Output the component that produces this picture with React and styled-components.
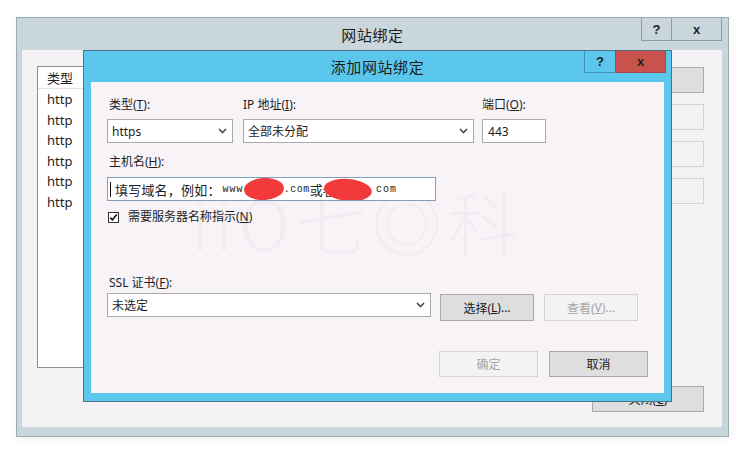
import React from 'react';
import styled, { createGlobalStyle } from 'styled-components';

const GlobalStyle = createGlobalStyle`
  html, body { margin: 0; background: #fff; }
  body {
    font-family: "Noto Sans", "Noto Sans CJK SC", sans-serif;
    font-size: 12px;
    color: #1e1e1e;
  }
  u { text-underline-offset: 1px; }
`;

const Page = styled.div`
  width: 744px;
  height: 453px;
  padding: 17px 0 0 16px;
  box-sizing: border-box;
  overflow: hidden;
`;

const Window = styled.div`
  position: relative;
  width: 713px;
  height: 420px;
  box-sizing: border-box;
  background: #c9d6dc;
  border: 1px solid #9aabb4;
  box-shadow: 0 3px 10px rgba(0, 0, 0, 0.06);
  display: flex;
  flex-direction: column;
`;

const TitleBar = styled.div`
  display: grid;
  grid-template-columns: 1fr auto 1fr;
  align-items: start;
  height: ${p => p.$h}px;
  flex: none;
  background: ${p => p.$bg};
`;

const Title = styled.div`
  grid-column: 2;
  align-self: center;
  font-family: "Noto Sans CJK SC", sans-serif;
  font-size: 15px;
  letter-spacing: 0.6px;
  color: #1c1c1c;
`;

const Caption = styled.div`
  grid-column: 3;
  justify-self: end;
  display: flex;
  margin-right: ${p => p.$mr}px;
`;

const CapButton = styled.div`
  width: ${p => p.$w}px;
  height: ${p => p.$h}px;
  box-sizing: border-box;
  display: flex;
  align-items: center;
  justify-content: center;
  background: ${p => p.$bg || 'transparent'};
  border: 1px solid ${p => p.$line};
  border-top: none;
  margin-left: -1px;
  font-family: "Liberation Sans", sans-serif;
  font-weight: bold;
  font-size: 13px;
  color: #222;
`;

const WindowBody = styled.div`
  flex: 1;
  margin: 0 6px 9px 5px;
  background: #f5f2f5;
  display: grid;
  grid-template-columns: 1fr 116px;
  column-gap: 8px;
  padding: 16px 18px 15px 15px;
`;

const BindingList = styled.div`
  height: 302px;
  box-sizing: border-box;
  background: #fff;
  border: 1px solid #8a8f96;
`;

const ListHead = styled.div`
  height: 22px;
  box-sizing: border-box;
  border-bottom: 1px solid #e3e3e3;
  padding-left: 9px;
  font-family: "Noto Sans CJK SC", sans-serif;
  font-size: 13px;
  line-height: 21px;
`;

const ListRow = styled.div`
  padding-left: 9px;
  font-size: 13px;
  line-height: 20.5px;
  &:first-of-type { margin-top: 2px; }
`;

const SideColumn = styled.div`
  display: flex;
  flex-direction: column;
  align-items: flex-end;
  gap: 11px;
  padding-top: 1px;
`;

const Button = styled.div`
  width: ${p => p.$w}px;
  height: ${p => p.$h || 26}px;
  box-sizing: border-box;
  display: flex;
  align-items: center;
  justify-content: center;
  background: ${p => (p.$disabled ? '#f4f3f4' : '#dedede')};
  border: 1px solid ${p => (p.$disabled ? '#d3d3d3' : '#a9a9a9')};
  color: ${p => (p.$disabled ? '#a6a6a6' : '#1a1a1a')};
  font-size: 12px;
  margin-top: ${p => p.$mt || 0}px;
  margin-left: ${p => p.$ml || 0}px;
`;

const CloseButton = styled(Button)`
  margin-top: auto;
`;

const Dialog = styled.div`
  position: absolute;
  left: 66px;
  top: 32px;
  width: 589px;
  height: 352px;
  box-sizing: border-box;
  border: 1px solid #4c7285;
  background: #5cc7ec;
  display: flex;
  flex-direction: column;
`;

const DialogContent = styled.div`
  position: relative;
  flex: 1;
  margin: 0 7px 8px 7px;
  background: #f7f3f7;
  padding: 15px 16px 16px 16px;
  display: flex;
  flex-direction: column;
`;

const Watermark = styled.div`
  position: absolute;
  left: 100px;
  top: 88px;
  z-index: 0;
  font-family: "Noto Sans CJK SC", sans-serif;
  font-size: 70px;
  font-weight: 300;
  letter-spacing: 6px;
  color: rgba(60, 40, 60, 0.03);
  pointer-events: none;
  white-space: nowrap;
`;

const FieldRow = styled.div`
  position: relative;
  display: flex;
  align-items: flex-start;
  gap: ${p => p.$gap || 0}px;
  margin-top: ${p => p.$mt || 0}px;
  justify-content: ${p => (p.$end ? 'flex-end' : 'flex-start')};
`;

const Field = styled.div`
  position: relative;
  width: ${p => p.$w}px;
  margin-left: ${p => p.$ml || 0}px;
  display: flex;
  flex-direction: column;
  gap: ${p => p.$gap ?? 6}px;
`;

const Label = styled.div`
  line-height: 16px;
  padding-left: ${p => p.$pl || 0}px;
  margin-top: ${p => p.$mt || 0}px;
  white-space: nowrap;
`;

const Select = styled.div`
  width: ${p => (p.$w ? `${p.$w}px` : '100%')};
  height: 24px;
  box-sizing: border-box;
  background: #fff;
  border: 1px solid #aaaaaa;
  display: flex;
  align-items: center;
  justify-content: space-between;
  padding: 0 5px 0 4px;
  font-size: 12px;
`;

const TextInput = styled.div`
  width: ${p => (p.$w ? `${p.$w}px` : '100%')};
  height: 24px;
  box-sizing: border-box;
  background: #fff;
  border: 1px solid ${p => (p.$focus ? '#7f9fc0' : '#aaaaaa')};
  display: flex;
  align-items: center;
  padding-left: 2px;
  font-size: 12px;
  white-space: nowrap;
  overflow: hidden;
`;

const Caret = styled.span`
  width: 1px;
  height: 15px;
  background: #111;
  margin-right: 4px;
  flex: none;
`;

const Hint = styled.span`
  font-family: "Noto Sans CJK SC", sans-serif;
  font-size: 13px;
  letter-spacing: 0.2px;
`;

const Mono = styled.span`
  font-family: "Liberation Mono", monospace;
  font-size: 10px;
  letter-spacing: ${p => p.$ls ?? 1}px;
  margin-left: ${p => p.$ml || 0}px;
`;

const Redact = styled.span`
  display: inline-block;
  flex: none;
  width: ${p => p.$w}px;
  height: 22px;
  border-radius: 50%;
  background: #f23a3a;
  margin-left: ${p => p.$ml || 0}px;
  transform: rotate(${p => p.$r || 0}deg) translateY(${p => p.$dy || 0}px);
`;

const CheckRow = styled.div`
  position: relative;
  display: flex;
  align-items: center;
  gap: 9px;
  margin-top: 8px;
  padding-left: 1px;
  line-height: 16px;
`;

const Chevron = () => (
  <svg width="9" height="6" viewBox="0 0 9 6">
    <path d="M1 1 L4.5 4.6 L8 1" fill="none" stroke="#4a4a4a" strokeWidth="1.6" />
  </svg>
);

const CheckMark = () => (
  <svg width="11" height="11" viewBox="0 0 11 11">
    <rect x="0.5" y="0.5" width="10" height="10" fill="#fff" stroke="#333" />
    <path d="M2.3 5.6 L4.4 7.8 L8.8 2.6" fill="none" stroke="#111" strokeWidth="1.6" />
  </svg>
);

const bindings = ['http', 'http', 'http', 'http', 'http', 'http'];

export default function App() {
  return (
    <>
      <GlobalStyle />
      <Page>
        <Window>
          <TitleBar $h={32} $bg="#c9d6dc">
            <Title>网站绑定</Title>
            <Caption $mr={6}>
              <CapButton $w={31} $h={23} $line="#8c9ca6">?</CapButton>
              <CapButton $w={51} $h={23} $line="#8c9ca6">x</CapButton>
            </Caption>
          </TitleBar>
          <WindowBody>
            <BindingList>
              <ListHead>类型</ListHead>
              {bindings.map((b, i) => (
                <ListRow key={i}>{b}</ListRow>
              ))}
            </BindingList>
            <SideColumn>
              <Button $w={116}>添加(A)...</Button>
              <Button $w={116} $disabled>编辑(E)...</Button>
              <Button $w={116} $disabled>删除(R)</Button>
              <Button $w={116} $disabled>浏览(B)</Button>
              <CloseButton $w={112}>关闭(<u>C</u>)</CloseButton>
            </SideColumn>
          </WindowBody>

          <Dialog>
            <TitleBar $h={31} $bg="#5cc7ec">
              <Title>添加网站绑定</Title>
              <Caption $mr={5}>
                <CapButton $w={32} $h={22} $line="#3f93b6">?</CapButton>
                <CapButton $w={51} $h={22} $line="#a94444" $bg="#c9524c">x</CapButton>
              </Caption>
            </TitleBar>
            <DialogContent>
              <Watermark>iiO七◎科</Watermark>
              <FieldRow>
                <Field $w={126}>
                  <Label $pl={2}>类型(<u>T</u>):</Label>
                  <Select>
                    <span>https</span>
                    <Chevron />
                  </Select>
                </Field>
                <Field $w={231} $ml={10}>
                  <Label>IP 地址(<u>I</u>):</Label>
                  <Select>
                    <span>全部未分配</span>
                    <Chevron />
                  </Select>
                </Field>
                <Field $w={64} $ml={8}>
                  <Label>端口(<u>O</u>):</Label>
                  <TextInput>&nbsp;443</TextInput>
                </Field>
              </FieldRow>

              <Field $w={329} $gap={7}>
                <Label $pl={2} $mt={11}>主机名(<u>H</u>):</Label>
                <TextInput $focus>
                  <Caret />
                  <Hint>填写域名，例如：</Hint>
                  <Mono $ml={2}>www</Mono>
                  <Redact $w={40} $r={-3} />
                  <Mono $ls={0.5}>.com</Mono>
                  <Hint>或者</Hint>
                  <Redact $w={48} $ml={-12} $r={5} $dy={1} />
                  <Mono $ml={4}>com</Mono>
                </TextInput>
              </Field>

              <CheckRow>
                <CheckMark />
                <span>需要服务器名称指示(<u>N</u>)</span>
              </CheckRow>

              <Label $pl={2} $mt={50}>SSL 证书(<u>F</u>):</Label>
              <FieldRow $mt={2}>
                <Select $w={324}>
                  <span>未选定</span>
                  <Chevron />
                </Select>
                <Button $w={94} $h={27} $mt={1} $ml={9}>选择(<u>L</u>)...</Button>
                <Button $w={94} $h={27} $mt={1} $ml={10} $disabled>查看(<u>V</u>)...</Button>
              </FieldRow>

              <FieldRow $mt={30} $gap={11} $end>
                <Button $w={99} $disabled>确定</Button>
                <Button $w={99}>取消</Button>
              </FieldRow>
            </DialogContent>
          </Dialog>
        </Window>
      </Page>
    </>
  );
}
